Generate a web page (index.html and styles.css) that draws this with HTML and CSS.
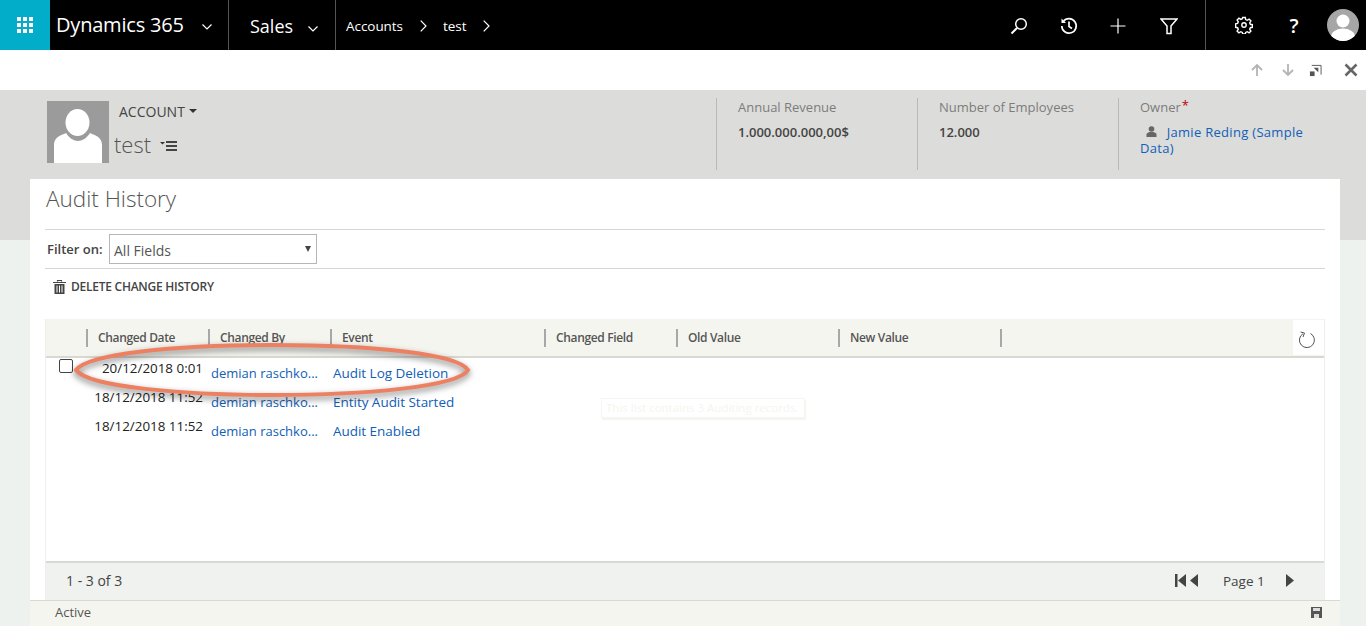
FILE: index.html
```html
<!DOCTYPE html>
<html lang="en">
<head>
<meta charset="utf-8">
<title>Audit History</title>
<link rel="stylesheet" href="styles.css">
</head>
<body>
<div class="page">
  <nav class="nav">
    <div class="tile">
      <svg class="ico16" viewBox="0 0 16 16"><g fill="#fff"><rect x="0" y="0" width="4" height="4"/><rect x="6" y="0" width="4" height="4"/><rect x="12" y="0" width="4" height="4"/><rect x="0" y="6" width="4" height="4"/><rect x="6" y="6" width="4" height="4"/><rect x="12" y="6" width="4" height="4"/><rect x="0" y="12" width="4" height="4"/><rect x="6" y="12" width="4" height="4"/><rect x="12" y="12" width="4" height="4"/></g></svg>
    </div>
    <div class="nav-brand">
      <span class="brand-text">Dynamics 365</span>
      <svg class="chev" viewBox="0 0 10 6"><path d="M.5.5 5 5 9.500.5" fill="none" stroke="#fff" stroke-width="1.200"/></svg>
    </div>
    <div class="nav-app">
      <span class="app-text">Sales</span>
      <svg class="chev" viewBox="0 0 10 6"><path d="M.5.5 5 5 9.500.5" fill="none" stroke="#fff" stroke-width="1.200"/></svg>
    </div>
    <div class="crumbs">
      <span class="crumb crumb-a">Accounts</span>
      <svg class="crumb-arrow arrow-a" viewBox="0 0 7 12"><path d="M.7.700 6 6 .7 11.300" fill="none" stroke="#fff" stroke-width="1.200"/></svg>
      <span class="crumb crumb-b">test</span>
      <svg class="crumb-arrow arrow-b" viewBox="0 0 7 12"><path d="M.7.700 6 6 .7 11.300" fill="none" stroke="#fff" stroke-width="1.200"/></svg>
    </div>
    <div class="nav-tools">
      <svg class="tool" viewBox="0 0 18 18"><circle cx="11" cy="7" r="5.300" fill="none" stroke="#fff" stroke-width="1.500"/><path d="M7 11 1.500 16.500" stroke="#fff" stroke-width="2"/></svg>
      <svg class="tool" viewBox="0 0 18 18"><path d="M3.300 4.500A7.200 7.200 0 1 1 1.800 9" fill="none" stroke="#fff" stroke-width="1.700"/><path d="M1.500 1.500v4.500h4.500z" fill="#fff"/><path d="M9 4.500V9.500l3 2" fill="none" stroke="#fff" stroke-width="1.700"/></svg>
      <svg class="tool" viewBox="0 0 18 18"><path d="M8 1.500v15M.5 9h15" stroke="#fff" stroke-width="1.200"/></svg>
      <svg class="tool" viewBox="0 0 18 18"><path d="M1 2h16l-6 7v7.500H7V9z" fill="none" stroke="#fff" stroke-width="1.500"/></svg>
    </div>
    <div class="nav-sys">
      <svg class="tool" viewBox="0 0 18 18"><circle cx="9" cy="9" r="2.200" fill="none" stroke="#fff" stroke-width="1.400"/><path d="M7.700 1.500h2.600l.4 2.100 1.500.7 1.900-1.200 1.800 1.800-1.200 1.900.7 1.500 2 .4v2.600l-2 .4-.7 1.500 1.200 1.900-1.800 1.800-1.900-1.200-1.500.7-.4 1.600H7.700l-.4-1.600-1.500-.7-1.900 1.200-1.800-1.800 1.200-1.900-.7-1.500-2-.4V7.800l2-.4.700-1.500-1.200-1.900 1.800-1.800 1.900 1.200 1.500-.7z" fill="none" stroke="#fff" stroke-width="1.400"/></svg>
      <span class="help">?</span>
      <svg class="me" viewBox="0 0 32 32"><defs><clipPath id="meclip"><circle cx="16" cy="16" r="16"/></clipPath></defs><circle cx="16" cy="16" r="16" fill="#a6a6a6"/><g clip-path="url(#meclip)" fill="#fff"><circle cx="16" cy="12" r="6.500"/><ellipse cx="16" cy="28" rx="12" ry="8.500"/></g></svg>
    </div>
  </nav>

  <div class="subbar">
    <svg class="sub-ico sub-up" viewBox="0 0 14 14"><path d="M7 13V2M2 7l5-5 5 5" fill="none" stroke="#b4b4b4" stroke-width="1.800"/></svg>
    <svg class="sub-ico sub-down" viewBox="0 0 14 14"><path d="M7 1v11M2 7l5 5 5-5" fill="none" stroke="#b4b4b4" stroke-width="1.800"/></svg>
    <svg class="sub-ico sub-pop" viewBox="0 0 14 14"><path d="M3 1.500h10v10" fill="none" stroke="#555" stroke-width="1"/><rect x="1" y="8" width="5" height="5" fill="#555"/><path d="M5 4h5v5z" fill="#555"/></svg>
    <svg class="sub-ico sub-close" viewBox="0 0 14 14"><path d="M1.500 1.500l11 11M12.500 1.500l-11 11" stroke="#666" stroke-width="2.600"/></svg>
  </div>

  <main class="main">
    <header class="rec">
      <svg class="rec-pic" viewBox="0 0 62 62"><rect width="62" height="62" fill="#9b9b9b"/><ellipse cx="30.500" cy="21.500" rx="12" ry="13.500" fill="#fff"/><path d="M7 62V44c0-6 4-9 10-11l2-1c3 5 8 8 12 8s9-3 12-8l2 1c6 2 10 5 10 11V62z" fill="#fff"/></svg>
      <div class="rec-title">
        <div class="rec-type"><span>ACCOUNT</span><i class="caret"></i></div>
        <div class="rec-name"><span>test</span>
          <svg class="rec-menu" viewBox="0 0 17 12"><path d="M0 2h5L2.500 4.500z" fill="#333"/><path d="M6 2h11M6 6h11M6 10h11" stroke="#444" stroke-width="2"/></svg>
        </div>
      </div>
      <div class="fields">
        <div class="field">
          <div class="f-label">Annual Revenue</div>
          <div class="f-value">1.000.000.000,00$</div>
        </div>
        <div class="field">
          <div class="f-label">Number of Employees</div>
          <div class="f-value">12.000</div>
        </div>
        <div class="field">
          <div class="f-label">Owner<span class="req">*</span></div>
          <div class="f-owner">
            <svg class="owner-ico" viewBox="0 0 11 11"><circle cx="5.500" cy="3" r="2.800" fill="#666"/><path d="M.5 11V8.500C.5 7 2 6.500 3.500 6h4c1.500.5 3 1 3 2.500V11z" fill="#666"/></svg>
            <a class="link">Jamie Reding (Sample<br>Data)</a>
          </div>
        </div>
      </div>
    </header>

    <section class="card">
      <h1 class="card-title">Audit History</h1>
      <div class="filter">
        <label class="filter-label">Filter on:</label>
        <div class="select"><span>All Fields</span><i class="sel-caret"></i></div>
      </div>
      <div class="cmd">
        <svg class="trash" viewBox="0 0 13 14"><path d="M4.500 1.500V.5h4v1M0 2.500h13" stroke="#444" stroke-width="1.200" fill="none"/><path d="M1.500 4h10v10h-10z" fill="#444"/><path d="M4 5.500v7M6.500 5.500v7M9 5.500v7" stroke="#fff" stroke-width="1"/></svg>
        <span>DELETE CHANGE HISTORY</span>
      </div>
      <div class="grid">
        <div class="g-head">
          <div class="th th-1">Changed Date</div>
          <div class="th th-2">Changed By</div>
          <div class="th th-3">Event</div>
          <div class="th th-4">Changed Field</div>
          <div class="th th-5">Old Value</div>
          <div class="th th-6">New Value</div>
          <div class="th-end"></div>
          <div class="refresh">
            <svg class="refresh-ico" viewBox="0 0 18 18"><path d="M5 2.700A7.500 7.500 0 1 0 12.500 2.500" fill="none" stroke="#555" stroke-width="1"/><path d="M2.500 1 6.500 2 5 6" fill="none" stroke="#555" stroke-width="1"/></svg>
          </div>
        </div>
        <div class="g-body">
          <div class="row">
            <div class="cell-check"><i class="check"></i></div>
            <div class="cell-date">20/12/2018 0:01</div>
            <a class="link cell-by">demian raschko...</a>
            <a class="link cell-ev">Audit Log Deletion</a>
          </div>
          <div class="row">
            <div class="cell-check"></div>
            <div class="cell-date">18/12/2018 11:52</div>
            <a class="link cell-by">demian raschko...</a>
            <a class="link cell-ev">Entity Audit Started</a>
          </div>
          <div class="row">
            <div class="cell-check"></div>
            <div class="cell-date">18/12/2018 11:52</div>
            <a class="link cell-by">demian raschko...</a>
            <a class="link cell-ev">Audit Enabled</a>
          </div>
        </div>
        <div class="g-foot">
          <span class="count">1 - 3 of 3</span>
          <div class="pager">
            <svg class="pg-first" viewBox="0 0 11 13"><rect width="2.500" height="13" fill="#444"/><path d="M11 0v13L3 6.500z" fill="#444"/></svg>
            <svg class="pg-prev" viewBox="0 0 8 13"><path d="M8 0v13L0 6.500z" fill="#444"/></svg>
            <span class="pg-text">Page 1</span>
            <svg class="pg-next" viewBox="0 0 8 13"><path d="M0 0v13l8-6.500z" fill="#444"/></svg>
          </div>
        </div>
      </div>
      <footer class="status">
        <span>Active</span>
        <svg class="save" viewBox="0 0 11 11"><path d="M0 0h11v11H0z" fill="#555"/><rect x="2" y="1" width="7" height="3" fill="#ddd"/><rect x="3" y="7" width="5" height="4" fill="#ddd"/></svg>
      </footer>
    </section>
  </main>

  <div class="ghost-tip">This list contains 3 Auditing records.</div>
  <svg class="mark" viewBox="0 0 400 60"><path d="M3 28C15 12 100 3 200 3S385 12 395 28C385 45 290 53 200 53S15 45 3 28z" fill="none" stroke="#ec8061" stroke-width="4"/></svg>
</div>
</body>
</html>
```

FILE: styles.css
```css
* { box-sizing: border-box; }
html, body { margin: 0; padding: 0; height: 100%; overflow: hidden; }
body { font-family: "Open Sans", "Noto Sans", sans-serif; font-size: 12px; color: #333; background: #fff; }
.page { position: relative; width: 1366px; height: 626px; display: flex; flex-direction: column; }

.nav { height: 50px; background: #000; color: #fff; display: flex; align-items: center; flex: none; }
.tile { width: 50px; height: 50px; background: #01adc8; display: flex; align-items: center; justify-content: center; flex: none; }
.ico16 { width: 16px; height: 16px; }
.nav-brand { width: 179px; height: 50px; padding-left: 6px; padding-bottom: 2px; display: flex; align-items: center; border-right: 1px solid #555; flex: none; }
.brand-text { font-size: 20px; width: 146px; letter-spacing: -.2px; }
.chev { width: 10px; height: 6px; margin-top: 6px; }
.nav-app { width: 107px; height: 50px; padding-left: 21px; padding-top: 1px; display: flex; align-items: center; border-right: 1px solid #555; flex: none; }
.app-text { font-size: 18px; width: 58px; }
.crumbs { display: flex; align-items: center; height: 50px; flex: none; padding-left: 10px; padding-top: 2px; width: 674px; }
.crumb { font-size: 13.500px; letter-spacing: -.05px; }
.crumb-a { width: 74px; }
.crumb-arrow { width: 7px; height: 12px; }
.arrow-a { margin-right: 16px; }
.crumb-b { width: 40px; }
.nav-tools { display: flex; align-items: center; width: 196px; height: 50px; padding-top: 2px; gap: 32px; flex: none; border-right: 1px solid #555; }
.tool { width: 18px; height: 18px; flex: none; }
.nav-sys { display: flex; align-items: center; height: 50px; padding-left: 29px; flex: none; }
.help { font-size: 20px; font-weight: 600; width: 18px; text-align: center; margin-left: 32px; }
.me { width: 32px; height: 32px; margin-left: 24px; flex: none; }

.subbar { height: 40px; background: #fff; display: flex; align-items: center; justify-content: flex-end; flex: none; padding-right: 8px; }
.sub-ico { width: 14px; height: 14px; flex: none; }
.sub-up { margin-right: 17px; }
.sub-down { margin-right: 14px; }
.sub-pop { margin-right: 22px; width: 13px; height: 13px; }

.main { flex: 1; min-height: 0; padding: 0 26px 0 30px; display: flex; flex-direction: column; background: linear-gradient(#dcdcda 150px, #eef2ef 150px); }
.rec { height: 89px; display: flex; flex: none; padding-left: 17px; padding-top: 11px; }
.rec-pic { width: 62px; height: 62px; flex: none; }
.rec-title { margin-left: 5px; width: 602px; }
.rec-type { padding-left: 5px; height: 22px; font-size: 14px; line-height: 22px; color: #444; display: flex; align-items: center; }
.caret { margin-left: 4px; margin-bottom: 3px; border: 4px solid transparent; border-top-color: #333; border-bottom-width: 0; }
.rec-name { font-size: 22px; font-weight: 300; color: #555; line-height: 30px; margin-top: 6px; display: flex; align-items: center; }
.rec-menu { width: 17px; height: 12px; margin-left: 9px; margin-top: 4px; }
.fields { display: flex; margin-top: -3px; }
.field { width: 201px; height: 72px; border-left: 1px solid #b9b9b9; padding-left: 21px; }
.f-label { font-size: 13px; color: #7c7c7c; line-height: 18px; }
.f-value { font-size: 13px; font-weight: 600; color: #444; margin-top: 7px; line-height: 18px; }
.req { color: #c00000; position: relative; top: -2px; margin-left: 1px; }
.f-owner { margin-top: 8px; font-size: 13px; line-height: 16px; letter-spacing: .3px; }
.owner-ico { width: 11px; height: 11px; margin: 0 6px 0 6px; }
.link { color: #1160b7; text-decoration: none; }

.card { flex: 1; min-height: 0; background: #fff; display: flex; flex-direction: column; }
.card-title { margin: 0; padding-left: 16px; height: 50px; line-height: 40px; font-size: 22.500px; font-weight: 300; color: #555; flex: none; }
.filter { margin: 0 15px; height: 40px; border-top: 1px solid #d6d6d6; border-bottom: 1px solid #d6d6d6; display: flex; align-items: center; padding-left: 2px; flex: none; }
.filter-label { font-size: 13px; font-weight: 600; color: #444; width: 62px; }
.select { width: 208px; height: 30px; border: 1px solid #b6b6b6; padding: 2px 0 0 4px; display: flex; align-items: center; justify-content: space-between; font-size: 14px; color: #555; }
.sel-caret { margin-right: 5px; margin-bottom: 2px; border: 3.500px solid transparent; border-top: 6px solid #444; border-bottom-width: 0; }
.cmd { height: 50px; margin-left: 23px; padding-bottom: 15px; display: flex; align-items: center; gap: 5px; font-size: 12px; font-weight: 600; color: #444; letter-spacing: -.25px; flex: none; }
.trash { width: 13px; height: 14px; }

.grid { flex: 1; min-height: 0; margin: 0 15px; border-left: 1px solid #eee; border-right: 1px solid #eee; display: flex; flex-direction: column; }
.g-head { position: relative; height: 39px; background: #f5f5f0; border-bottom: 2px solid #d9d9d4; display: flex; align-items: center; padding-left: 40px; flex: none; }
.th { height: 18px; border-left: 2px solid #a8a8a8; padding-left: 10px; font-size: 12px; font-weight: 600; color: #555; line-height: 18px; letter-spacing: -.35px; margin-top: 1px; flex: none; }
.th-1, .th-2 { width: 122px; }
.th-3 { width: 214px; }
.th-4 { width: 132px; }
.th-5, .th-6 { width: 162px; }
.th-end { height: 18px; border-left: 2px solid #a8a8a8; margin-top: 1px; }
.refresh { position: absolute; right: 0; top: 1px; width: 31px; height: 35px; background: #fff; display: flex; align-items: center; justify-content: center; }
.refresh-ico { width: 18px; height: 18px; margin-top: 5px; margin-right: 4px; }
.g-body { flex: 1; background: #fff; padding-top: 1px; }
.row { height: 29px; display: flex; align-items: flex-start; }
.cell-check { width: 14px; margin-left: 13px; flex: none; height: 14px; }
.check { display: block; width: 14px; height: 14px; border: 1px solid #444; border-radius: 2px; }
.cell-date { width: 130px; text-align: right; font-size: 13.400px; color: #222; line-height: 18px; flex: none; }
.cell-by { width: 122px; margin-left: 8px; font-size: 13px; line-height: 18px; padding-top: 5px; flex: none; }
.cell-ev { font-size: 13.500px; line-height: 18px; padding-top: 5px; letter-spacing: -.03px; }
.g-foot { height: 39px; background: #eff2ee; border-top: 2px solid #d9d9d4; display: flex; align-items: center; padding-left: 20px; padding-bottom: 2px; flex: none; }
.count { font-size: 14px; color: #444; }
.pager { margin-left: auto; display: flex; align-items: center; padding-right: 30px; }
.pg-first { width: 11px; height: 13px; }
.pg-prev { width: 8px; height: 13px; margin-left: 4px; }
.pg-text { font-size: 13.500px; color: #444; width: 51px; margin-left: 25px; }
.pg-next { width: 8px; height: 13px; margin-left: 12px; }
.status { height: 26px; background: #f5f5f0; border-top: 1px solid #d9d9d4; display: flex; align-items: center; justify-content: space-between; padding: 0 18px 3px 25px; font-size: 13px; color: #555; flex: none; }
.save { width: 11px; height: 11px; }

.ghost-tip { position: absolute; left: 601px; top: 398px; width: 204px; height: 20px; border: 1px solid #f6f6f1; box-shadow: 1px 2px 1px #f6f6f1; font-size: 11.500px; line-height: 18px; padding-left: 4px; color: #f5f5f0; white-space: nowrap; overflow: hidden; }
.mark { position: absolute; left: 73px; top: 342px; width: 400px; height: 60px; filter: drop-shadow(0 3px 3px rgba(0,0,0,.5)); }
```
